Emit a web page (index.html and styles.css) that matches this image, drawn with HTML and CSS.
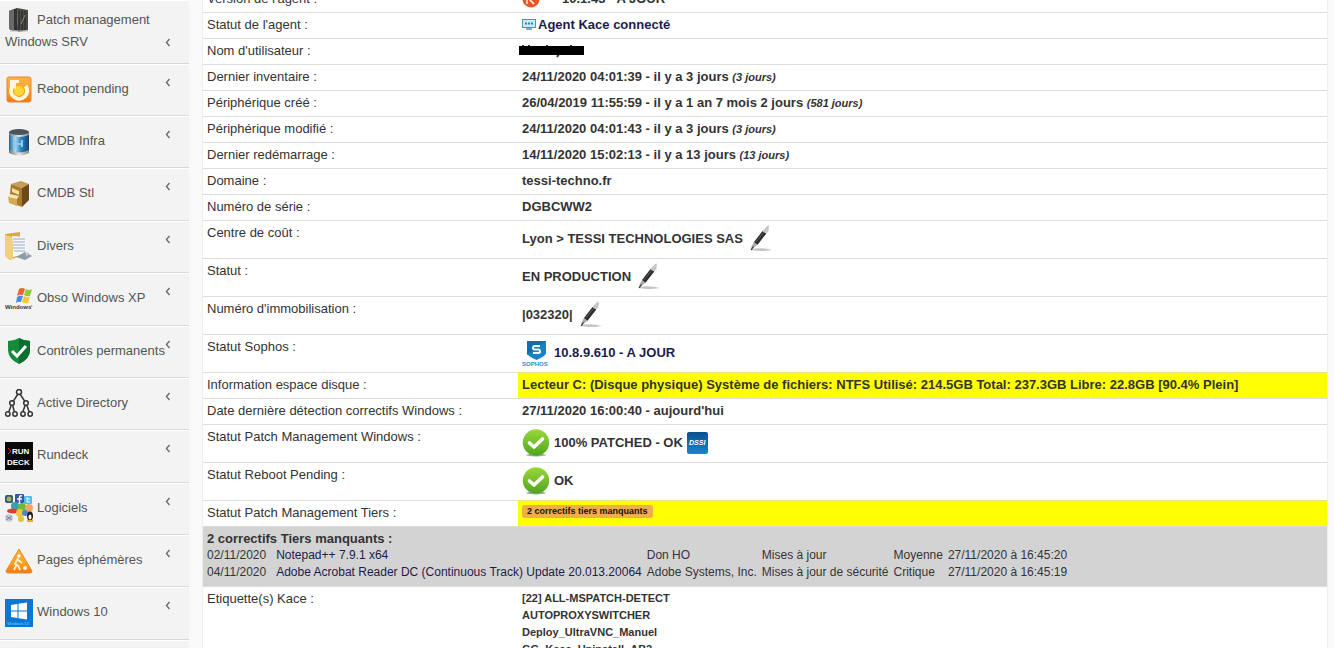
FILE: index.html
```html
<!DOCTYPE html>
<html lang="fr">
<head>
<meta charset="utf-8">
<title>Inventaire du poste</title>
<link rel="stylesheet" href="styles.css">
</head>
<body>
<svg width="0" height="0" class="defs" aria-hidden="true">
  <defs>
    <linearGradient id="orange" x1="0" y1="0" x2="0" y2="1"><stop offset="0" stop-color="#f9b34a"/><stop offset=".6" stop-color="#f8a21e"/><stop offset="1" stop-color="#f07818"/></linearGradient>
    <linearGradient id="blue" x1="0" y1="0" x2="1" y2="0"><stop offset="0" stop-color="#1d5f92"/><stop offset=".3" stop-color="#a9dcf3"/><stop offset=".6" stop-color="#2b84c0"/><stop offset="1" stop-color="#0e4672"/></linearGradient>
    <linearGradient id="green" x1="0" y1="0" x2="0" y2="1"><stop offset="0" stop-color="#9bd83a"/><stop offset="1" stop-color="#4fa51f"/></linearGradient>
    <linearGradient id="navy" x1="0" y1="0" x2="0" y2="1"><stop offset="0" stop-color="#0a4f8c"/><stop offset="1" stop-color="#1a86c8"/></linearGradient>
    <linearGradient id="metal" x1="0" y1="0" x2="1" y2="0"><stop offset="0" stop-color="#777"/><stop offset=".5" stop-color="#e8e8e8"/><stop offset="1" stop-color="#888"/></linearGradient>
    <symbol id="pen" viewBox="0 0 28 28">
      <path d="M4 24Q14 22 25 25Q14 27 4 25Z" fill="#c4c4c4"/>
      <path d="M4.500 21.500L7 17L10.500 19.500L6 23.500L4 25Z" fill="#a9abad"/>
      <path d="M7 17L15.500 6L19.300 8.500L10.500 19.700Z" fill="#2b2d2f"/>
      <path d="M9 17L17 7" stroke="#666b6e" stroke-width=".8"/>
      <path d="M15.500 6L20 1L22 .5L21.500 6L19.300 8.500Z" fill="#c5c7c9"/>
      <path d="M4 25L6.500 21.500" stroke="#333" stroke-width="1.200"/>
    </symbol>
    <symbol id="check" viewBox="0 0 28 28">
      <ellipse cx="14" cy="26" rx="10" ry="1.500" fill="#aaa"/>
      <circle cx="14" cy="13.500" r="13.200" fill="url(#green)"/>
      <path d="M7.500 14L12 18L20.500 10" fill="none" stroke="#fff" stroke-width="3.600" stroke-linecap="round" stroke-linejoin="round"/>
    </symbol>
    <symbol id="chevron" viewBox="0 0 6 9"><path d="M4.500 1L1.500 4.500L4.500 8" fill="none" stroke="#666" stroke-width="1.300"/></symbol>
  </defs>
</svg>
<div class="page">
  <nav class="sidebar">
    <a class="item first" href="#"><span class="label"><svg class="icon" viewBox="0 0 28 28"><path d="M4 4L12 1L13 24L5 23Z" fill="#333"/><path d="M12 1L23 3V23L13 25Z" fill="#4a4a48"/><path d="M4 4L9 2V24L4 22Z" fill="#6a6a6a"/><path d="M14 4V23M17 4V23M20 4V23" stroke="#242622" stroke-width="1"/><path d="M16 17L20 8" stroke="#7b9168"/><path d="M5 24H23" stroke="#bbb"/></svg>Patch management Windows SRV</span><svg class="chev"><use href="#chevron"/></svg></a>
    <a class="item" href="#"><span class="label"><svg class="icon" viewBox="0 0 28 28"><rect x="2" y="2" width="24" height="25" rx="2" fill="url(#orange)" stroke="#e98336"/><circle cx="14" cy="16" r="5" fill="#fbd733"/><path d="M7 12A8 8 0 1 0 20.500 11" fill="none" stroke="#fff8df" stroke-width="4"/><path d="M5 5H14V8L11 8V14L5 12Z" fill="#fff8df"/></svg>Reboot pending</span><svg class="chev"><use href="#chevron"/></svg></a>
    <a class="item" href="#"><span class="label"><svg class="icon" viewBox="0 0 28 28"><path d="M4 4V24Q14 30 24 24V4Z" fill="url(#blue)"/><path d="M4 4V7Q14 11 24 7V4Z" fill="url(#metal)"/><ellipse cx="14" cy="4" rx="10" ry="3" fill="#48555d"/><path d="M4 22V25Q14 30 24 25V22Q14 27 4 22Z" fill="url(#metal)"/><path d="M11 12V20M17 12V19M11 16H17" stroke="#8dcae8" stroke-width="2"/></svg>CMDB Infra</span><svg class="chev"><use href="#chevron"/></svg></a>
    <a class="item" href="#"><span class="label"><svg class="icon" viewBox="0 0 28 28"><path d="M6 4L16 1L24 4L17 8Z" fill="#c79d56"/><path d="M6 4L17 8V27L4 22Z" fill="#a97a31"/><path d="M17 8L24 4V20L17 27Z" fill="#6c481b"/><path d="M7 8L14 11V15L7 12Z" fill="#f3df9a"/><path d="M3 16L12 18V26L4 23Z" fill="#d5a94f"/><path d="M5 14L14 16L12 19L3 17Z" fill="#f7e6b4"/></svg>CMDB Stl</span><svg class="chev"><use href="#chevron"/></svg></a>
    <a class="item" href="#"><span class="label"><svg class="icon" viewBox="0 0 28 28"><path d="M0 2L15 0V24L5 28L0 24Z" fill="#d9a94f"/><path d="M7 4L21 5V22L8 25Z" fill="#f3f6fa"/><path d="M8 7H20M8 10H20M8 13H20M8 16H20M9 19H20" stroke="#9faebc"/><path d="M0 3L7 5L8 27L5 28L0 24Z" fill="#f2cf80"/><path d="M11 25L20 20L27 24L20 28Z" fill="#8d9aa7"/><path d="M19 19L24 21L22 25Z" fill="#c4ccd5"/></svg>Divers</span><svg class="chev"><use href="#chevron"/></svg></a>
    <a class="item" href="#"><span class="label"><svg class="icon" viewBox="0 0 28 28"><path d="M14 4Q17 2 20 4L18 10Q15 9 12 11Z" fill="#f0642c"/><path d="M21 4Q24 6 27 4L25 11Q22 12 19 10Z" fill="#8ccb3c"/><path d="M12 12Q15 10 18 11L16 17Q13 16 11 18Z" fill="#438be4"/><path d="M19 11Q22 13 25 12L23 18Q20 19 17 17Z" fill="#f6c732"/><text x="0" y="24" class="xp">Windows</text><circle cx="26.500" cy="21" r="1" fill="#f0906c"/></svg>Obso Windows XP</span><svg class="chev"><use href="#chevron"/></svg></a>
    <a class="item" href="#"><span class="label"><svg class="icon" viewBox="0 0 28 28"><path d="M14 1Q19 4 25 4V13Q25 22 14 27Q3 22 3 13V4Q9 4 14 1Z" fill="#158a3a"/><path d="M14 1Q19 4 25 4V13Q25 22 14 27Z" fill="#0b6e2c"/><path d="M7 14L12 19L21 9" fill="none" stroke="#fff" stroke-width="3"/></svg>Contrôles permanents</span><svg class="chev"><use href="#chevron"/></svg></a>
    <a class="item" href="#"><span class="label"><svg class="icon" viewBox="0 0 28 28"><g fill="#f3f3f3" stroke="#333" stroke-width="1.500"><path d="M13 5L7 14L3 25M7 14L10 25M15 5L21 14L17 25M21 14L25 25" fill="none"/><circle cx="14" cy="3" r="2.500"/><circle cx="7" cy="14" r="2.300"/><circle cx="21" cy="14" r="2.300"/><circle cx="2.800" cy="25" r="2.200"/><circle cx="10" cy="25" r="2.200"/><circle cx="18" cy="25" r="2.200"/><circle cx="25.200" cy="25" r="2.200"/></g></svg>Active Directory</span><svg class="chev"><use href="#chevron"/></svg></a>
    <a class="item" href="#"><span class="label"><svg class="icon" viewBox="0 0 28 28"><rect width="28" height="28" fill="#080808"/><path d="M3 6L6 9L3 12" fill="none" stroke="#c22"/><text x="7" y="12" class="run">RUN</text><text x="2" y="23" class="run">DECK</text></svg>Rundeck</span><svg class="chev"><use href="#chevron"/></svg></a>
    <a class="item" href="#"><span class="label"><svg class="icon" viewBox="0 0 28 28"><rect x="0" y="1" width="8" height="8" rx="2" fill="#36556f"/><circle cx="4" cy="5" r="2.500" fill="#9ab75a"/><rect x="10" y="0" width="9" height="9" rx="1" fill="#36589c"/><path d="M17 2Q14 1 14.500 5V9M12 5H17" fill="none" stroke="#fff" stroke-width="1.500"/><rect x="19" y="2" width="8" height="8" rx="1" fill="#4fbde9"/><path d="M22 3V8H25M22 5H25" fill="none" stroke="#fff"/><circle cx="10" cy="12" r="4" fill="#38a1ae"/><circle cx="17" cy="13" r="4" fill="#72b639"/><circle cx="24" cy="14" r="4" fill="#f4a66b"/><ellipse cx="8" cy="17" rx="6" ry="2.500" fill="#db3e32"/><circle cx="15" cy="19" r="4" fill="#ecc63b"/><circle cx="20" cy="19" r="3" fill="#4d86c9"/><circle cx="4" cy="24" r="3.800" fill="#c2cbd8"/><path d="M1 22L7 26M7 22L1 26" stroke="#7a8797"/><circle cx="16" cy="25" r="3" fill="#e2c23d"/><ellipse cx="25" cy="22" rx="3" ry="4.500" fill="#222"/><ellipse cx="25" cy="23" rx="1.500" ry="2.500" fill="#fff"/><path d="M22 27H28" stroke="#efa91d" stroke-width="2"/></svg>Logiciels</span><svg class="chev"><use href="#chevron"/></svg></a>
    <a class="item" href="#"><span class="label"><svg class="icon" viewBox="0 0 28 28"><path d="M14 2L27 24Q27 26 25 26H3Q1 26 1 24Z" fill="url(#orange)" stroke="#e78b22"/><circle cx="14" cy="9" r="1.700" fill="#fff"/><path d="M13 11L10 17L13 19M12 12L17 16M12 17L9 23M13 18L15 23" fill="none" stroke="#fff3d0" stroke-width="1.700"/><circle cx="20" cy="21" r="2" fill="#fff3d0"/></svg>Pages éphémères</span><svg class="chev"><use href="#chevron"/></svg></a>
    <a class="item" href="#"><span class="label"><svg class="icon" viewBox="0 0 28 28"><rect width="28" height="28" fill="#0878d4"/><path d="M6 6L12.500 5V11.500H6ZM13.500 4.800L22 3.500V11.500H13.500ZM6 12.500H12.500V19L6 18ZM13.500 12.500H22V20.500L13.500 19.200Z" fill="#fff"/><text x="2" y="26" class="win">Windows 10</text></svg>Windows 10</span><svg class="chev"><use href="#chevron"/></svg></a>
    <a class="item" href="#"><span class="label"></span></a>
  </nav>
  <main class="panel">
    <table class="details">
      <colgroup><col class="names"><col></colgroup>
      <tbody>
      <tr><th scope="row">Version de l'agent :</th><td><span class="value"><svg class="kace" viewBox="0 0 36 18"><circle cx="9" cy="9" r="8.500" fill="#ea5423"/><path d="M5 14V5M13 5L7 9L12 14" fill="none" stroke="#fff" stroke-width="1.500"/><path d="M21 8H33" stroke="#ccc" stroke-width="2"/></svg>10.1.43 - A JOUR</span></td></tr>
      <tr><th scope="row">Statut de l'agent :</th><td><a class="value snug" href="#"><svg class="screen" viewBox="0 0 14 11"><rect x=".5" y=".5" width="13" height="8" fill="#c9ecfa" stroke="#3c9ac9"/><path d="M3 4.500H11" stroke="#2a87b8" stroke-width="2" stroke-dasharray="2 1"/><path d="M4 10H10" stroke="#3c9ac9" stroke-width="1.500"/></svg>Agent Kace connecté</a></td></tr>
      <tr><th scope="row">Nom d'utilisateur :</th><td><svg class="masked" viewBox="0 0 65 17"><path d="M4 3V6M10 3V6M28 3V6M52 3V6M40 12L38 15" stroke="#333" stroke-width="2"/><rect y="4" width="65" height="9"/></svg></td></tr>
      <tr><th scope="row">Dernier inventaire :</th><td>24/11/2020 04:01:39 - il y a 3 jours <em>(3 jours)</em></td></tr>
      <tr><th scope="row">Périphérique créé :</th><td>26/04/2019 11:55:59 - il y a 1 an 7 mois 2 jours <em>(581 jours)</em></td></tr>
      <tr><th scope="row">Périphérique modifié :</th><td>24/11/2020 04:01:43 - il y a 3 jours <em>(3 jours)</em></td></tr>
      <tr><th scope="row">Dernier redémarrage :</th><td>14/11/2020 15:02:13 - il y a 13 jours <em>(13 jours)</em></td></tr>
      <tr><th scope="row">Domaine :</th><td>tessi-techno.fr</td></tr>
      <tr><th scope="row">Numéro de série :</th><td>DGBCWW2</td></tr>
      <tr><th scope="row">Centre de coût :</th><td><span class="value tall">Lyon &gt; TESSI TECHNOLOGIES SAS <button class="edit" aria-label="Modifier"><svg><use href="#pen"/></svg></button></span></td></tr>
      <tr><th scope="row">Statut :</th><td><span class="value tall">EN PRODUCTION <button class="edit" aria-label="Modifier"><svg><use href="#pen"/></svg></button></span></td></tr>
      <tr><th scope="row">Numéro d'immobilisation :</th><td><span class="value tall">|032320| <button class="edit" aria-label="Modifier"><svg><use href="#pen"/></svg></button></span></td></tr>
      <tr><th scope="row">Statut Sophos :</th><td><a class="value tall" href="#"><svg class="mark" viewBox="0 0 28 28"><path d="M5 2H24V14Q24 17 14.500 21Q5 17 5 14Z" fill="#1484c8"/><path d="M5 2H24L5 16Z" fill="#0e70b3"/><path d="M18 7H13Q11 7 11 9Q11 10.500 13 10.500H16Q18 10.500 18 12.500Q18 14 16 14H11" fill="none" stroke="#fff" stroke-width="2"/><text x="0" y="27" class="sophos">SOPHOS</text></svg>10.8.9.610 - A JOUR</a></td></tr>
      <tr><th scope="row">Information espace disque :</th><td class="warn">Lecteur C: (Disque physique) Système de fichiers: NTFS Utilisé: 214.5GB Total: 237.3GB Libre: 22.8GB [90.4% Plein]</td></tr>
      <tr><th scope="row">Date dernière détection correctifs Windows :</th><td>27/11/2020 16:00:40 - aujourd'hui</td></tr>
      <tr><th scope="row">Statut Patch Management Windows :</th><td><span class="value tall"><svg class="mark"><use href="#check"/></svg>100% PATCHED - OK<svg class="dssi" viewBox="0 0 21 22"><rect width="21" height="22" rx="2" fill="url(#navy)"/><text x="2" y="13">DSSI</text></svg></span></td></tr>
      <tr><th scope="row">Statut Reboot Pending :</th><td><span class="value tall"><svg class="mark"><use href="#check"/></svg>OK</span></td></tr>
      <tr><th scope="row">Statut Patch Management Tiers :</th><td class="warn"><span class="badge">2 correctifs tiers manquants</span></td></tr>
      <tr class="missing"><td colspan="2">
        <strong>2 correctifs Tiers manquants :</strong>
        <table class="patches">
          <tr><td>02/11/2020</td><td><a href="#">Notepad++ 7.9.1 x64</a></td><td>Don HO</td><td>Mises à jour</td><td>Moyenne</td><td>27/11/2020 à 16:45:20</td></tr>
          <tr><td>04/11/2020</td><td><a href="#">Adobe Acrobat Reader DC (Continuous Track) Update 20.013.20064</a></td><td>Adobe Systems, Inc.</td><td>Mises à jour de sécurité</td><td>Critique</td><td>27/11/2020 à 16:45:19</td></tr>
        </table>
      </td></tr>
      <tr><th scope="row">Etiquette(s) Kace :</th><td class="tags">[22] ALL-MSPATCH-DETECT<br>AUTOPROXYSWITCHER<br>Deploy_UltraVNC_Manuel<br>GG_Kace_Uninstall_AB2</td></tr>
      </tbody>
    </table>
  </main>
</div>
</body>
</html>
```
FILE: styles.css
```css
* { box-sizing: border-box; }
html { height: 100%; overflow: hidden; }
body {
  margin: 0;
  height: 100%;
  overflow: hidden;
  background: #f9f9f9;
  color: #333;
  font: 13px/17px "Liberation Sans", Arial, sans-serif;
}
a { color: inherit; text-decoration: none; }
.defs { position: absolute; }
.page { display: flex; align-items: flex-start; gap: 13px; padding-right: 6px; }

.sidebar { flex: 0 0 189px; background: #f3f3f3; }
.item {
  display: flex;
  justify-content: space-between;
  padding: 13px 18px 15px 5px;
  border-top: 1px solid #fff;
  border-bottom: 1px solid #d9d9d9;
  color: #555;
}
.item.first { padding: 8px 18px 9px 5px; }
.label { flex: 1; min-height: 22px; line-height: 1.72; white-space: nowrap; }
.first .label { white-space: normal; }
.icon { width: 28px; height: 28px; margin: -4px 4px -4px 0; vertical-align: middle; }
.chev { flex: none; width: 6px; height: 9px; }
.first .chev { align-self: flex-end; margin-bottom: 7px; }
.xp { font: bold 6px "Liberation Sans", sans-serif; fill: #333; }
.run { font: bold 8px "Liberation Sans", sans-serif; fill: #fff; }
.win { font: 4px "Liberation Sans", sans-serif; fill: #8cc8f4; }

.panel { flex: 1; min-width: 0; margin-top: -14px; background: #fff; border: 1px solid #eee; border-top: 0; }
table { border-collapse: collapse; }
.details { width: 100%; table-layout: fixed; }
.names { width: 315px; }
.details th, .details td { padding: 3px 4px 5px; border-top: 1px solid #ddd; text-align: left; vertical-align: top; font-weight: normal; }
.details > tbody > tr > td { font-weight: bold; }
em { font-size: 11px; line-height: 1; }
.value { display: flex; align-items: center; gap: 4px; height: 17px; }
.value.tall { height: 29px; }
.value.snug { gap: 2px; }
a.value, .patches a { color: #1c1c4c; }
.kace { width: 36px; height: 18px; }
.screen { width: 14px; height: 11px; }
.mark { width: 28px; height: 28px; }
.edit { padding: 0; border: 0; background: none; }
.edit svg { display: block; width: 28px; height: 28px; }
.sophos { font: bold 6px "Liberation Sans", sans-serif; fill: #3389c0; }
.dssi { width: 21px; height: 22px; }
.dssi text { font: italic bold 7px "Liberation Sans", sans-serif; fill: #fff; }
.masked { display: block; width: 65px; height: 17px; margin-left: -3px; }
.details td.warn { background: #ff0; border-color: #e6e68c; }
.badge { display: inline-block; margin-top: 1px; padding: 0 5px; border-radius: 3px; background: #f0ad4e; color: #111; font-size: 9px; line-height: 13px; vertical-align: top; }
.details .missing > td { background: #d3d3d3; font-weight: normal; }
.missing strong { display: block; }
.details .patches td { padding: 0 5px 0 0; border: 0; font-size: 12px; }
.details .patches td:first-child { padding-right: 10px; }
.details td.tags { font-size: 11px; }
```
